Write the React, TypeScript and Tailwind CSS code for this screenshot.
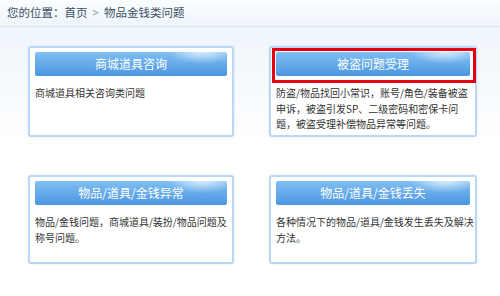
import React from "react";

const font = { fontFamily: '"Noto Sans CJK SC", "Noto Sans", sans-serif' };

function Card({ title, lines, highlight }: { title: string; lines: string[]; highlight?: boolean }) {
  return (
    <div className="relative h-full rounded-[3px] border-2 border-[#bad8f3] bg-white px-[5px] pt-[4px] shadow-[0_0_2px_rgba(150,190,230,0.4)]">
      {highlight && (
        <div className="pointer-events-none absolute left-[1px] top-0 h-[35px] w-[204px] border-[3px] border-[#e60012]" />
      )}
      <div className="relative flex h-[24px] items-center justify-center overflow-hidden rounded-[2px] bg-gradient-to-b from-[#80bff3] to-[#4b96e1] text-[12px] text-white">
        <div className="absolute right-[-10px] top-[-14px] h-[26px] w-[70px] rounded-full bg-[radial-gradient(closest-side,rgba(255,255,255,0.75),rgba(255,255,255,0))]" />
        <span className="relative">{title}</span>
      </div>
      <div className="mt-[9px] text-[10px] leading-[15.5px] text-[#333]">
        {lines.map((l, i) => (
          <div key={i} className="whitespace-nowrap">{l}</div>
        ))}
      </div>
    </div>
  );
}

export default function App() {
  return (
    <div className="h-[296px] w-[500px] overflow-hidden bg-white" style={font}>
      <div className="flex h-[27px] items-center border-b border-[#d6e4f1] bg-gradient-to-b from-[#fbfdff] to-[#eef5fb] pl-[7px] text-[11.5px] text-[#3d4f63]">
        <span>您的位置：首页</span>
        <span className="mx-[5px] text-[#8a99a8]">&gt;</span>
        <span>物品金钱类问题</span>
      </div>
      <div className="bg-gradient-to-b from-[#eef5fb] via-white to-white pl-[28px] pt-[19px]">
        <div className="grid grid-cols-[206px_208px] grid-rows-[91px_89px] gap-x-[35px] gap-y-[38px]">
          <Card title="商城道具咨询" lines={["商城道具相关咨询类问题"]} />
          <Card
            title="被盗问题受理"
            highlight
            lines={[
              "防盗/物品找回小常识，账号/角色/装备被盗",
              "申诉，被盗引发SP、二级密码和密保卡问",
              "题，被盗受理补偿物品异常等问题。",
            ]}
          />
          <Card title="物品/道具/金钱异常" lines={["物品/金钱问题，商城道具/装扮/物品问题及", "称号问题。"]} />
          <Card title="物品/道具/金钱丢失" lines={["各种情况下的物品/道具/金钱发生丢失及解决", "方法。"]} />
        </div>
      </div>
    </div>
  );
}
